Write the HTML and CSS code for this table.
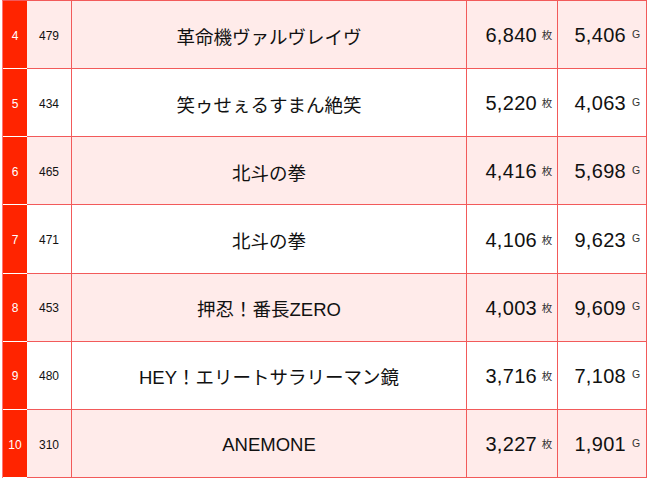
FILE: index.html
```html
<!DOCTYPE html>
<html lang="ja">
<head>
<meta charset="utf-8">
<link rel="stylesheet" href="styles.css">
</head>
<body>
<div class="table">
  <div class="row alt"><div class="rank">4</div><div class="no">479</div><div class="name">革命機ヴァルヴレイヴ</div><div class="val"><span class="num">6,840</span><span class="unit">枚</span></div><div class="val"><span class="num">5,406</span><span class="unit g">G</span></div></div>
  <div class="row"><div class="rank">5</div><div class="no">434</div><div class="name">笑ゥせぇるすまん絶笑</div><div class="val"><span class="num">5,220</span><span class="unit">枚</span></div><div class="val"><span class="num">4,063</span><span class="unit g">G</span></div></div>
  <div class="row alt"><div class="rank">6</div><div class="no">465</div><div class="name">北斗の拳</div><div class="val"><span class="num">4,416</span><span class="unit">枚</span></div><div class="val"><span class="num">5,698</span><span class="unit g">G</span></div></div>
  <div class="row"><div class="rank">7</div><div class="no">471</div><div class="name">北斗の拳</div><div class="val"><span class="num">4,106</span><span class="unit">枚</span></div><div class="val"><span class="num">9,623</span><span class="unit g">G</span></div></div>
  <div class="row alt"><div class="rank">8</div><div class="no">453</div><div class="name">押忍！番長ZERO</div><div class="val"><span class="num">4,003</span><span class="unit">枚</span></div><div class="val"><span class="num">9,609</span><span class="unit g">G</span></div></div>
  <div class="row"><div class="rank">9</div><div class="no">480</div><div class="name">HEY！エリートサラリーマン鏡</div><div class="val"><span class="num">3,716</span><span class="unit">枚</span></div><div class="val"><span class="num">7,108</span><span class="unit g">G</span></div></div>
  <div class="row alt"><div class="rank">10</div><div class="no">310</div><div class="name">ANEMONE</div><div class="val"><span class="num">3,227</span><span class="unit">枚</span></div><div class="val"><span class="num">1,901</span><span class="unit g">G</span></div></div>
</div>
</body>
</html>
```
FILE: styles.css
```css
* { box-sizing: border-box; }
html, body { margin: 0; padding: 0; background: #fff; }
body {
  font-family: "Liberation Sans", "Noto Sans CJK JP", sans-serif;
  color: #111;
}
.table {
  margin-left: 2px;
  width: 645px;
  border-top: 1px solid #f25a5a;
  border-left: 1px solid #f77;
}
.row {
  display: grid;
  grid-template-columns: 24px 45px 395px 91px 89px;
  height: 68.17px;
  background: #fff;
}
.row.alt { background: #ffebea; }
.row > div {
  display: flex;
  align-items: center;
  padding-top: 2px;
  border-bottom: 1px solid #f25a5a;
}
.rank {
  background: #ff2400;
  color: #fff;
  font-size: 12px;
  justify-content: center;
  border-bottom-color: #fff !important;
}
.no {
  font-size: 12px;
  justify-content: center;
  border-right: 1px solid #f25a5a;
}
.name {
  font-size: 18.5px;
  justify-content: center;
  border-right: 1px solid #f25a5a;
}
.val {
  justify-content: flex-end;
  padding-right: 3px;
  border-right: 1px solid #f25a5a;
}
.num {
  font-size: 20px;
  letter-spacing: 0.3px;
}
.unit {
  width: 14px;
  margin-left: 3px;
  text-align: center;
  font-size: 10.5px;
  color: #333;
  position: relative;
  top: -1px;
}
.unit.g { font-size: 10.5px; top: -2px; }
```
